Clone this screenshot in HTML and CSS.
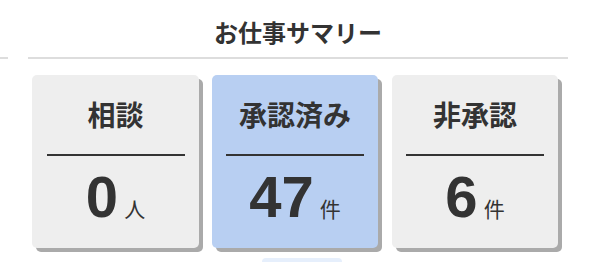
FILE: index.html
```html
<!DOCTYPE html>
<html lang="ja">
<head>
<meta charset="utf-8">
<link rel="stylesheet" href="styles.css">
</head>
<body>
<div class="page">
  <div class="stub"></div>
  <section class="summary">
    <h2 class="title">お仕事サマリー</h2>
    <div class="cards">
      <div class="card">
        <div class="card-head">相談</div>
        <div class="card-rule"></div>
        <div class="card-value"><span class="num">0</span><span class="unit">人</span></div>
      </div>
      <div class="card card-active">
        <div class="card-head">承認済み</div>
        <div class="card-rule"></div>
        <div class="card-value"><span class="num">47</span><span class="unit">件</span></div>
      </div>
      <div class="card">
        <div class="card-head">非承認</div>
        <div class="card-rule"></div>
        <div class="card-value"><span class="num">6</span><span class="unit">件</span></div>
      </div>
    </div>
    <div class="peek"></div>
  </section>
</div>
</body>
</html>
```

FILE: styles.css
```css
* { box-sizing: border-box; }
html, body {
  margin: 0;
  padding: 0;
  background: #ffffff;
  font-family: "Liberation Sans", "Noto Sans CJK JP", sans-serif;
  color: #333333;
  overflow: hidden;
}
.page {
  display: flex;
  gap: 20px;
  width: 590px;
  height: 262px;
}
.stub {
  width: 8px;
  height: 59px;
  border-bottom: 2px solid #dddddd;
  flex: none;
}
.summary {
  width: 540px;
  flex: none;
}
.title {
  margin: 0;
  padding: 14px 0 3px;
  height: 59px;
  line-height: 40px;
  font-size: 24px;
  font-weight: bold;
  text-align: center;
  border-bottom: 2px solid #dddddd;
}
.cards {
  display: grid;
  grid-template-columns: 167px 166px 167px;
  column-gap: 13px;
  padding: 16px 0 0 4px;
}
.card {
  height: 173px;
  background: #eeeeee;
  border-radius: 5px;
  box-shadow: 4px 4px 0 0 #aaaaaa;
  display: flex;
  flex-direction: column;
  align-items: center;
}
.card:last-child {
  margin-left: 1px;
}
.card-active {
  background: #b8cff2;
}
.card-head {
  margin-top: 22px;
  height: 40px;
  line-height: 40px;
  font-size: 28px;
  font-weight: bold;
}
.card-rule {
  margin-top: 17px;
  width: 138px;
  height: 2px;
  background: #333333;
}
.card-value {
  margin-top: 12px;
  display: flex;
  align-items: baseline;
}
.num {
  font-size: 58px;
  line-height: 58px;
  font-weight: bold;
}
.unit {
  margin-left: 6px;
  font-size: 21px;
}
.peek {
  margin: 10px 0 0 234px;
  width: 80px;
  height: 8px;
  background: #e6effc;
  border-radius: 4px 4px 0 0;
}
```
